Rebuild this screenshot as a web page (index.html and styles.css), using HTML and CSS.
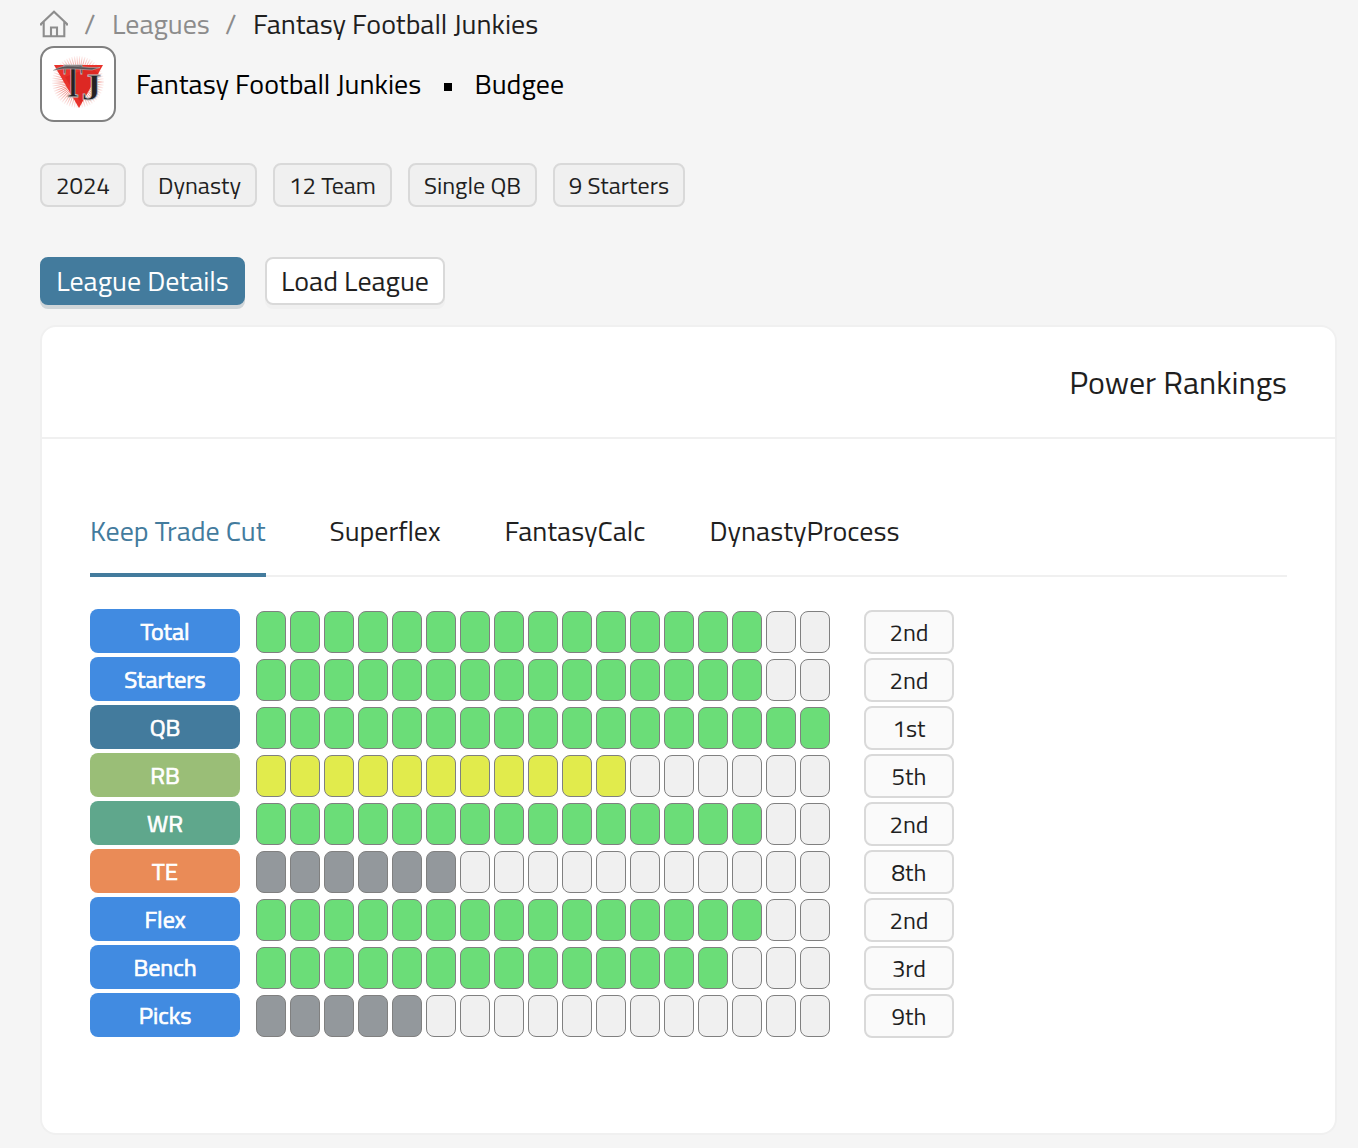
FILE: index.html
```html
<!DOCTYPE html>
<html lang="en">
<head>
<meta charset="utf-8">
<title>Fantasy Football Junkies</title>
<link rel="stylesheet" href="styles.css">
</head>
<body>
<main class="page">
  <nav class="breadcrumb">
    <svg class="home" viewBox="0 0 28 28" width="28" height="28" fill="none" stroke="#8d8d8d" stroke-width="2.1"><path d="M1 15.6V14L14 1.7 27 14v1.6M3.7 12v14.3h20.6V12M11 26v-8.500h6V26"/></svg>
    <span class="slash">/</span>
    <a class="crumb">Leagues</a>
    <span class="slash">/</span>
    <span class="current">Fantasy Football Junkies</span>
  </nav>
  <header class="title">
    <div class="logo">
      <svg viewBox="0 0 72 72" width="72" height="72">
        <defs>
          <radialGradient id="burst" gradientUnits="userSpaceOnUse" cx="36" cy="34" r="27"><stop offset=".4" stop-color="#e8584c"/><stop offset="1" stop-color="#fff"/></radialGradient>
        </defs>
        <circle cx="36" cy="34" r="14" fill="none" stroke="url(#burst)" stroke-width="24" stroke-dasharray=".65 .82"/>
        <path d="M12 17h49L37 60z" fill="#e8322b"/>
        <path d="M23 29l26-10 8 7-18 29z" fill="#d4201d" opacity=".55"/>
        <g class="monogram">
          <text transform="translate(21.500 48.500) scale(.75 1.250)">T</text>
          <text transform="translate(39.500 52) scale(1.050 1)">J</text>
        </g>
        <path d="M11 22.500q9-5.500 19-4.500l18 1.500 10 0-8 2.500-17-1q-11-1-22 1.500z" fill="#565154" stroke="#c9c2c2" stroke-width=".5"/>
      </svg>
    </div>
    <span class="league">Fantasy Football Junkies</span>
    <span class="bullet"></span>
    <span class="owner">Budgee</span>
  </header>
  <div class="tags">
    <span class="tag year">2024</span>
    <span class="tag type">Dynasty</span>
    <span class="tag teams">12 Team</span>
    <span class="tag format">Single QB</span>
    <span class="tag lineup">9 Starters</span>
  </div>
  <div class="actions">
    <button class="btn primary">League Details</button>
    <button class="btn secondary">Load League</button>
  </div>
  <section class="card">
    <div class="card-head"><h2>Power Rankings</h2></div>
    <div class="card-body">
      <div class="tabs">
        <span class="tab active">Keep Trade Cut</span>
        <span class="tab superflex">Superflex</span>
        <span class="tab calc">FantasyCalc</span>
        <span class="tab process">DynastyProcess</span>
      </div>
      <div class="rankings">
        <div class="row"><b class="label">Total</b><div class="bar good"><i></i><i></i><i></i><i></i><i></i><i></i><i></i><i></i><i></i><i></i><i></i><i></i><i></i><i></i><i></i><u></u><u></u></div><span class="rank">2nd</span></div>
        <div class="row"><b class="label">Starters</b><div class="bar good"><i></i><i></i><i></i><i></i><i></i><i></i><i></i><i></i><i></i><i></i><i></i><i></i><i></i><i></i><i></i><u></u><u></u></div><span class="rank">2nd</span></div>
        <div class="row"><b class="label qb">QB</b><div class="bar good"><i></i><i></i><i></i><i></i><i></i><i></i><i></i><i></i><i></i><i></i><i></i><i></i><i></i><i></i><i></i><i></i><i></i></div><span class="rank">1st</span></div>
        <div class="row"><b class="label rb">RB</b><div class="bar fair"><i></i><i></i><i></i><i></i><i></i><i></i><i></i><i></i><i></i><i></i><i></i><u></u><u></u><u></u><u></u><u></u><u></u></div><span class="rank">5th</span></div>
        <div class="row"><b class="label wr">WR</b><div class="bar good"><i></i><i></i><i></i><i></i><i></i><i></i><i></i><i></i><i></i><i></i><i></i><i></i><i></i><i></i><i></i><u></u><u></u></div><span class="rank">2nd</span></div>
        <div class="row"><b class="label te">TE</b><div class="bar poor"><i></i><i></i><i></i><i></i><i></i><i></i><u></u><u></u><u></u><u></u><u></u><u></u><u></u><u></u><u></u><u></u><u></u></div><span class="rank">8th</span></div>
        <div class="row"><b class="label">Flex</b><div class="bar good"><i></i><i></i><i></i><i></i><i></i><i></i><i></i><i></i><i></i><i></i><i></i><i></i><i></i><i></i><i></i><u></u><u></u></div><span class="rank">2nd</span></div>
        <div class="row"><b class="label">Bench</b><div class="bar good"><i></i><i></i><i></i><i></i><i></i><i></i><i></i><i></i><i></i><i></i><i></i><i></i><i></i><i></i><u></u><u></u><u></u></div><span class="rank">3rd</span></div>
        <div class="row"><b class="label">Picks</b><div class="bar poor"><i></i><i></i><i></i><i></i><i></i><u></u><u></u><u></u><u></u><u></u><u></u><u></u><u></u><u></u><u></u><u></u><u></u></div><span class="rank">9th</span></div>
      </div>
    </div>
  </section>
</main>
</body>
</html>
```
FILE: styles.css
```css
* { box-sizing: border-box; }
body {
  margin: 0;
  background: #f5f5f5;
  color: #1f1f1f;
  font: 400 28px/44px "Titillium Web", Roboto, sans-serif;
  white-space: nowrap;
}
.page { height: 1148px; padding: 0 21px 0 40px; overflow: hidden; }

.breadcrumb { display: flex; height: 46px; color: #8c8c8c; line-height: 47px; }
.home { margin-top: 10px; }
.slash { width: 12px; margin: 0 16px 0 16px; }
.crumb { width: 97px; }
.current { color: #1f1f1f; }

.title { display: flex; align-items: center; height: 76px; color: #000; }
.logo { width: 76px; height: 76px; border: 2px solid #808080; border-radius: 14px; background: #fff; overflow: hidden; }
.logo svg { display: block; }
.monogram { font: 700 38px "Liberation Serif", serif; fill: #242124; stroke: #c9c2c2; stroke-width: .8px; }
.league { width: 285px; margin-left: 20px; }
.bullet { width: 8px; height: 8px; margin: 5px 22.500px 0 23px; background: #000; }

.tags { display: flex; gap: 16px; margin-top: 41px; font-size: 24px; }
.tag { height: 44px; line-height: 40px; border: 2px solid #d9d9d9; border-radius: 8px; background: #f0f0f0; text-align: center; }
.year { width: 86px; }
.type { width: 115px; }
.teams { width: 119px; }
.format { width: 129px; }
.lineup { width: 132px; }

.actions { display: flex; gap: 20px; margin-top: 50px; }
.btn { height: 48px; padding: 0; border: 2px solid #d9d9d9; border-radius: 8px; font: inherit; text-align: center; }
.primary { width: 205px; color: #fff; background: #437b9d; border-color: #437b9d; box-shadow: 0 4px 0 #d0d6d9; }
.secondary { width: 180px; color: #1f1f1f; background: #fff; box-shadow: 0 4px 0 #f0f0f0; }

.card { height: 810px; margin-top: 20px; border: 2px solid #f0f0f0; border-radius: 16px; background: #fff; }
.card-head { height: 112px; padding: 0 48px; border-bottom: 2px solid #f0f0f0; display: flex; justify-content: flex-end; }
.card-head h2 { margin: 0; font-size: 32px; font-weight: 400; line-height: 110px; }
.card-body { padding: 48px 48px 0; }
.tabs { display: flex; gap: 64px; height: 90px; border-bottom: 2px solid #f0f0f0; line-height: 88px; }
.tab { height: 90px; }
.tab.active { width: 175.500px; color: #437b9d; border-bottom: 4px solid #437b9d; }
.superflex { width: 111px; }
.calc { width: 141px; }
.process { width: 190px; }

.rankings { display: flex; flex-direction: column; gap: 3px; margin-top: 32px; font-size: 24px; }
.row { display: flex; height: 45px; }
.label { width: 150px; height: 44px; border-radius: 8px; background: #418be1; color: #fff; font-weight: 400; -webkit-text-stroke: .7px #fff; line-height: 44px; text-align: center; }
.label.qb { background: #437b9d; }
.label.rb { background: #9abe77; }
.label.wr { background: #5fa78c; }
.label.te { background: #ea8b57; }
.bar { display: flex; gap: 4px; margin: 2px 34px 0 16px; }
.bar i, .bar u { width: 30px; height: 42px; border: 1px solid #808080; border-radius: 8px; background: #f0f0f0; }
.bar.good i { background: #6bdd78; }
.bar.fair i { background: #e1eb4c; }
.bar.poor i { background: #93989c; }
.rank { width: 90px; height: 44px; margin-top: 1px; border: 2px solid #d9d9d9; border-radius: 8px; background: #fafafa; line-height: 40px; text-align: center; }
```
